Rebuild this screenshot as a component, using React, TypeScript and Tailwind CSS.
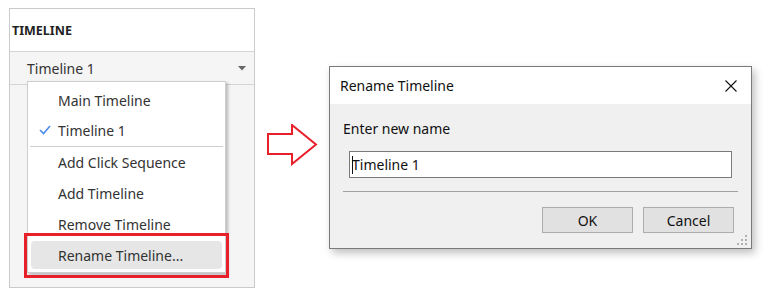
const font = { fontFamily: '"Noto Sans", "Open Sans", sans-serif' };

function MenuItem({ label, checked, h = "h-[31px]" }: { label: string; checked?: boolean; h?: string }) {
  return (
    <div className={`relative flex ${h} items-center pl-[30px] text-[14px] text-[#333]`}>
      {checked && (
        <svg className="absolute left-[11px] top-[10px]" width="12" height="10" viewBox="0 0 12 10">
          <polyline points="1,5 4.5,8.5 11,1" fill="none" stroke="#4a8cf0" strokeWidth="1.6" />
        </svg>
      )}
      {label}
    </div>
  );
}

function TimelinePanel() {
  return (
    <div className="relative ml-[9px] mt-[8px] flex h-[280px] w-[246px] flex-col border border-[#cacaca] bg-[#f5f5f5]">
      <div className="flex h-[42px] items-center bg-white pl-[2px] pt-[3px] text-[12.5px] font-bold text-[#222]">
        TIMELINE
      </div>
      <div className="flex h-[34px] items-center justify-between border-y border-[#d4d4d4] pl-[17px] pr-[8px] text-[14px] text-[#333]">
        <span>Timeline 1</span>
        <svg width="8" height="5" viewBox="0 0 8 5">
          <polygon points="0,0 8,0 4,4.5" fill="#666" />
        </svg>
      </div>

      <div className="absolute left-[17px] top-[72px] w-[199px] border border-[#cfcfcf] bg-white pt-[3px] pb-[3px] shadow-[2px_2px_3px_rgba(0,0,0,0.25)]">
        <MenuItem label="Main Timeline" h="h-[30px]" />
        <MenuItem label="Timeline 1" checked h="h-[30px]" />
        <div className="mx-[2px] mt-px h-px bg-[#cfcfcf]" />
        <MenuItem label="Add Click Sequence" />
        <MenuItem label="Add Timeline" />
        <MenuItem label="Remove Timeline" />
        <div className="mx-[3px] mt-px flex h-[28px] items-center rounded-[4px] bg-[#e5e6e5] pl-[27px] text-[14px] text-[#333]">
          Rename Timeline...
        </div>
      </div>

      <div className="absolute left-[14px] top-[224px] h-[45px] w-[205px] border-[3px] border-[#e8202a]" />
    </div>
  );
}

function Arrow() {
  return (
    <svg className="ml-[12px] mt-[124px]" width="52" height="42" viewBox="0 0 52 42">
      <polygon
        points="1,10 25,10 25,1 49,20.5 25,40 25,30 1,30"
        fill="white"
        stroke="#e8202a"
        strokeWidth="2"
        strokeLinejoin="miter"
      />
    </svg>
  );
}

function Grip() {
  const dots = [
    [8, 0],
    [4, 4],
    [8, 4],
    [0, 8],
    [4, 8],
    [8, 8],
  ];
  return (
    <svg className="absolute bottom-[3px] right-[4px]" width="10" height="10" viewBox="0 0 10 10">
      {dots.map(([x, y], i) => (
        <rect key={i} x={x} y={y} width="2" height="2" fill="#b0b0b0" />
      ))}
    </svg>
  );
}

function RenameDialog() {
  return (
    <div className="relative ml-[10px] mt-[66px] flex h-[183px] w-[423px] flex-col border border-[#7a7a7a] bg-[#f0f0f0] shadow-[3px_4px_8px_rgba(0,0,0,0.25)]">
      <div className="flex h-[37px] items-center justify-between bg-white pl-[10px] pr-[14px] text-[14px] text-[#111]">
        <span>Rename Timeline</span>
        <svg width="12" height="12" viewBox="0 0 12 12">
          <path d="M0.5 0.5 L11.5 11.5 M11.5 0.5 L0.5 11.5" stroke="#111" strokeWidth="1.1" />
        </svg>
      </div>
      <div className="flex flex-col px-[13px]">
        <div className="mt-[14px] text-[14px] text-[#111]">Enter new name</div>
        <div className="ml-[6px] mr-[6px] mt-[12px] flex h-[27px] items-center border border-[#7a7a7a] bg-white pl-[2px] text-[14px] text-[#111]">
          <span className="mr-[-1px] h-[18px] w-px bg-[#111]" />
          Timeline 1
        </div>
        <div className="mt-[13px] h-px bg-[#a0a0a0]" />
        <div className="mt-[15px] flex justify-end gap-[10px] pr-[4px]">
          <button className="flex h-[26px] w-[91px] items-center justify-center border border-[#adadad] bg-[#e1e1e1] text-[14px] text-[#111]">
            OK
          </button>
          <button className="flex h-[26px] w-[91px] items-center justify-center border border-[#adadad] bg-[#e1e1e1] text-[14px] text-[#111]">
            Cancel
          </button>
        </div>
      </div>
      <Grip />
    </div>
  );
}

export default function App() {
  return (
    <div className="flex h-[297px] w-[779px] items-start bg-white" style={font}>
      <TimelinePanel />
      <Arrow />
      <RenameDialog />
    </div>
  );
}
